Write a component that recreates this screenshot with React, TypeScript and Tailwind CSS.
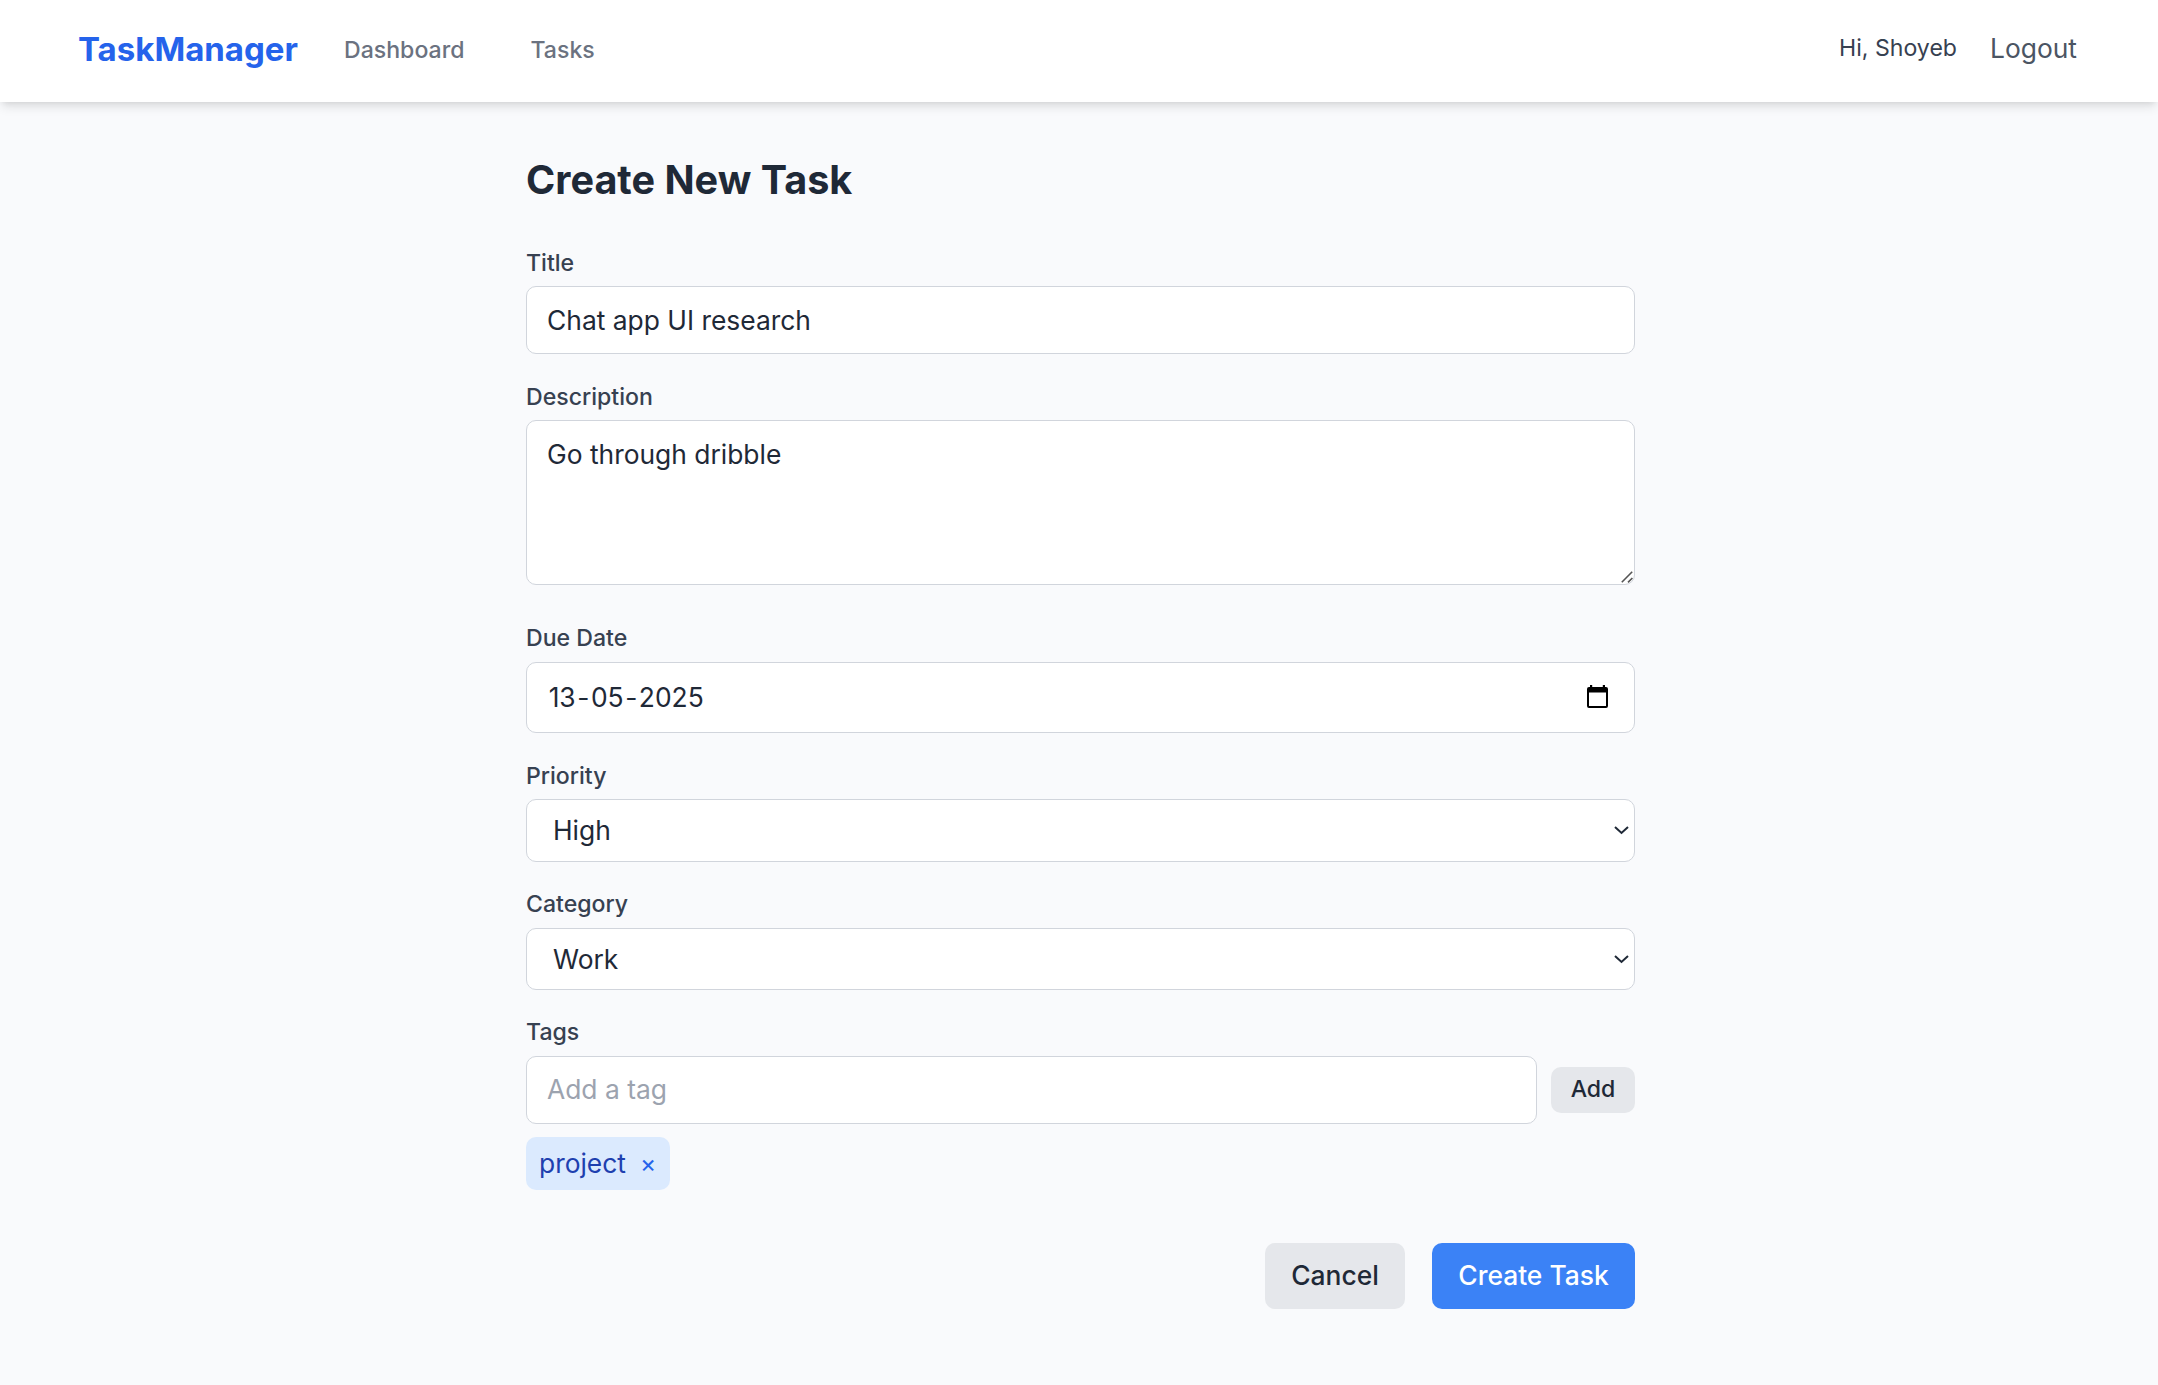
import type { ReactNode } from 'react';

const control =
  'block w-full rounded-[10px] border border-gray-300 bg-white text-[26.4px] text-[#1f2937] outline-none';

function Field({
  label,
  children,
  className = '',
  labelClassName = 'pt-px',
}: {
  label: string;
  children: ReactNode;
  className?: string;
  labelClassName?: string;
}) {
  return (
    <div className={className}>
      <label
        className={`mb-[6px] block h-[34px] text-[23.1px] leading-[33px] font-medium text-[#374151] ${labelClassName}`}
      >
        {label}
      </label>
      {children}
    </div>
  );
}

function Select({ value, options, className }: { value: string; options: string[]; className: string }) {
  return (
    <div className="relative">
      <select defaultValue={value} className={`${control} appearance-none pl-[26px] ${className}`}>
        {options.map((o) => (
          <option key={o}>{o}</option>
        ))}
      </select>
      <svg
        className="pointer-events-none absolute top-[26px] right-[6px] h-[10px] w-[15px]"
        viewBox="0 0 15 10"
        fill="none"
        stroke="#1f2937"
        strokeWidth="2"
      >
        <path d="M1 1.9 L7.5 8 L14 1.9" />
      </svg>
    </div>
  );
}

export default function App() {
  return (
    <div className="h-[1385px] w-full overflow-hidden bg-[#f9fafc] font-['Inter',sans-serif] text-[#1f2937]">
      <header className="flex h-[102px] items-start justify-between bg-white pr-[81px] pl-[78px] shadow-[0_6.6px_9.9px_-1.65px_rgba(0,0,0,0.1),0_3.3px_6.6px_-3.3px_rgba(0,0,0,0.1)]">
        <div className="flex items-start pt-[26px]">
          <span className="w-[266px] text-[33px] leading-[46px] font-bold text-[#2563eb]">TaskManager</span>
          <nav className="mt-[8px] flex gap-[66px] text-[23.1px] leading-[33px] font-medium text-[#6b7280]">
            <a>Dashboard</a>
            <a>Tasks</a>
          </nav>
        </div>
        <div className="flex items-start pt-[28px]">
          <span className="mt-[4px] mr-[33px] text-[23.1px] leading-[33px] text-[#374151]">Hi, Shoyeb</span>
          <button className="text-[26.4px] leading-[40px] text-[#4b5563]">Logout</button>
        </div>
      </header>

      <main className="ml-[526px] w-[1109px] pt-[52px]">
        <h1 className="mb-[39px] h-[53px] text-[39.6px] leading-[53px] font-bold">Create New Task</h1>

        <Field label="Title" className="mb-[26px]">
          <input defaultValue="Chat app UI research" className={`${control} h-[68px] px-[20px]`} />
        </Field>

        <Field label="Description" className="mb-[37px]">
          <div className="relative">
            <textarea
              defaultValue="Go through dribble"
              className={`${control} h-[165px] resize-none px-[20px] py-[13px] leading-[40px]`}
            />
            <svg
              className="absolute right-[2px] bottom-[2px] h-[12px] w-[12px]"
              viewBox="0 0 12 12"
              fill="none"
              stroke="#555"
              strokeWidth="1.6"
            >
              <path d="M0.8 11.2 L11.2 0.8 M7 11.4 L11.4 7" />
            </svg>
          </div>
        </Field>

        <Field label="Due Date" className="mb-[26px]" labelClassName="pt-0">
          <div className={`${control} flex h-[71px] items-center justify-between pr-[26px] pl-[20px]`}>
            <div className="flex">
              <span className="px-[1.65px]">13</span>
              <span>-</span>
              <span className="px-[1.5px]">05</span>
              <span>-</span>
              <span className="px-[1.5px]">2025</span>
            </div>
            <svg className="-mt-[2px] h-[23px] w-[21px]" viewBox="0 0 21 23">
              <path
                fill="#000"
                fillRule="evenodd"
                d="M3 0H5.2V2H15.8V0H18V2H19A2 2 0 0 1 21 4V21A2 2 0 0 1 19 23H2A2 2 0 0 1 0 21V4A2 2 0 0 1 2 2H3ZM2 7.5V21H19V7.5Z"
              />
            </svg>
          </div>
        </Field>

        <Field label="Priority" className="mb-[26px]">
          <Select value="High" options={['Low', 'Medium', 'High']} className="h-[63px]" />
        </Field>

        <Field label="Category" className="mb-[26px]" labelClassName="pt-0">
          <Select value="Work" options={['Work', 'Personal', 'Other']} className="h-[62px] pt-[2px]" />
        </Field>

        <Field label="Tags" labelClassName="pt-0">
          <div className="flex items-center gap-[14px]">
            <input
              placeholder="Add a tag"
              className={`${control} h-[68px] min-w-0 flex-1 px-[20px] pb-[2px] placeholder:text-[#9ca3af]`}
            />
            <button className="h-[46px] w-[84px] rounded-[10px] bg-[#e5e7eb] pb-[2px] text-[23.1px] leading-[33px] font-medium">
              Add
            </button>
          </div>
        </Field>

        <div className="mt-[13px] flex">
          <span className="flex h-[53px] w-[144px] items-center rounded-[10px] bg-[#dbeafe] pl-[13px] text-[26.4px] text-[#1e40af]">
            project
            <button className="ml-[14px] text-[24.5px] leading-[33px] text-[#2563eb]">×</button>
          </span>
        </div>

        <div className="mt-[53px] flex justify-end gap-[27px] text-[26.4px] font-medium">
          <button className="h-[66px] w-[140px] rounded-[10px] bg-[#e5e7eb]">Cancel</button>
          <button className="h-[66px] w-[203px] rounded-[10px] bg-[#3b82f6] text-white">Create Task</button>
        </div>
      </main>
    </div>
  );
}
